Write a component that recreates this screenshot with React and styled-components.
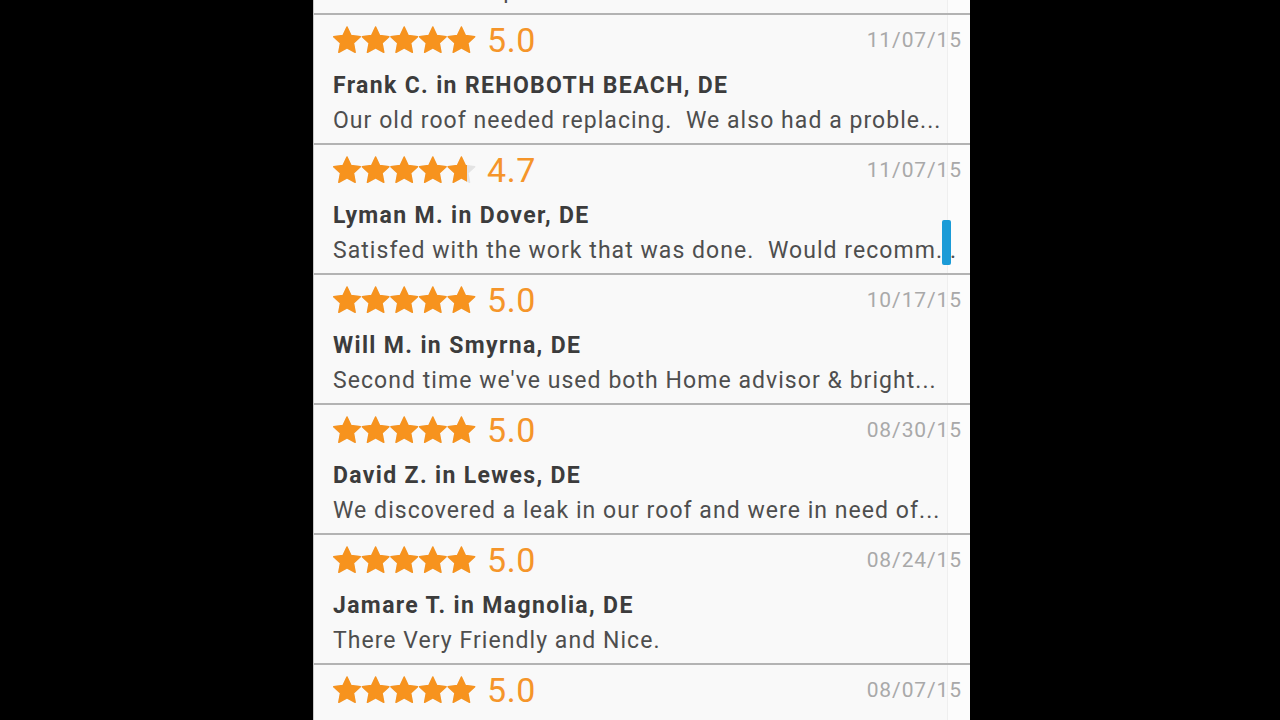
import { useId } from "react"
import styled, { createGlobalStyle } from "styled-components"

const reviews = [
    { rating: 5.0, date: "11/07/15", name: "Frank C. in REHOBOTH BEACH, DE", text: "Our old roof needed replacing.  We also had a proble..." },
    { rating: 4.7, date: "11/07/15", name: "Lyman M. in Dover, DE", text: "Satisfed with the work that was done.  Would recomm...", cursor: true },
    { rating: 5.0, date: "10/17/15", name: "Will M. in Smyrna, DE", text: "Second time we've used both Home advisor & bright..." },
    { rating: 5.0, date: "08/30/15", name: "David Z. in Lewes, DE", text: "We discovered a leak in our roof and were in need of..." },
    { rating: 5.0, date: "08/24/15", name: "Jamare T. in Magnolia, DE", text: "There Very Friendly and Nice." },
    { rating: 5.0, date: "08/07/15", name: "", text: "" },
]

const STAR = "14,1 18,9.5 27.3,10.7 20.5,17.1 22.2,26.3 14,21.8 5.8,26.3 7.5,17.1 0.7,10.7 10,9.5"
const STEP = 28.6

function Stars({ rating }){
    const id = useId().replace(/:/g, "")
    const full = Math.floor(rating)
    const fillWidth = full * STEP + (rating - full) * 28
    const stars = [0, 1, 2, 3, 4].map(i => (
        <polygon key={i} points={STAR} transform={`translate(${i * STEP} 0)`} strokeLinejoin="round" strokeWidth="1.4" />
    ))
    return(
        <svg width="143" height="28" viewBox="0 0 143 28">
            <defs>
                <clipPath id={id}><rect x="0" y="0" width={fillWidth} height="28" /></clipPath>
            </defs>
            <g fill="#e3e3e3" stroke="#e3e3e3">{stars}</g>
            <g fill="#f7931e" stroke="#f7931e" clipPath={`url(#${id})`}>{stars}</g>
        </svg>
    )
}

export default function App(){
    return(
        <Page>
            <GlobalStyle />
            <Panel>
                <PartialRow>
                    <Body>Done on time & professional.</Body>
                </PartialRow>
                {reviews.map((r, i) => (
                    <Row key={i}>
                        <Header>
                            <Stars rating={r.rating} />
                            <Score>{r.rating.toFixed(1)}</Score>
                            <Date>{r.date}</Date>
                        </Header>
                        <Name>{r.name}</Name>
                        <Body>{r.text}</Body>
                        {r.cursor && <Cursor />}
                    </Row>
                ))}
            </Panel>
        </Page>
    )
}

const GlobalStyle = createGlobalStyle`
    *{ box-sizing: border-box; }
    body{
        margin: 0;
        background: #000000;
        font-family: Roboto, "Noto Sans", sans-serif;
    }
`
const Page = styled.div`
    width: 1280px;
    height: 720px;
    padding-left: 313px;
    background: #000000;
    overflow: hidden;
`
const Panel = styled.div`
    width: 657px;
    height: 720px;
    overflow: hidden;
    border-left: 1px solid #c9c9c9;
    background: linear-gradient(to right, #f9f9f9 633px, #efefef 633px, #efefef 634px, #fcfcfc 634px);
`
const PartialRow = styled.div`
    height: 15px;
    display: flex;
    flex-direction: column;
    justify-content: flex-end;
    overflow: hidden;
    padding: 0 9px 4px 12px;
    border-bottom: 2px solid #b3b3b3;
`
const Row = styled.section`
    position: relative;
    height: 130px;
    padding: 10px 8px 4px 19px;
    border-bottom: 2px solid #b3b3b3;
`
const Header = styled.div`
    display: flex;
    align-items: center;
    height: 30px;
    margin-bottom: 14px;
`
const Score = styled.span`
    margin-left: 11px;
    font-size: 34px;
    line-height: 30px;
    letter-spacing: 0.6px;
    color: #f5952a;
`
const Date = styled.span`
    margin-left: auto;
    font-size: 21px;
    line-height: 30px;
    letter-spacing: 0.9px;
    color: #a9a9a9;
`
const Name = styled.h2`
    margin: 0;
    font-size: 23px;
    line-height: 34px;
    font-weight: 700;
    letter-spacing: 1.35px;
    color: #3c3c3c;
    white-space: nowrap;
`
const Body = styled.p`
    flex-shrink: 0;
    margin: 0;
    font-size: 23px;
    line-height: 36px;
    letter-spacing: 1.05px;
    color: #4e4e4e;
    white-space: pre;
    overflow: hidden;
`
const Cursor = styled.div`
    position: absolute;
    top: 75px;
    right: 19px;
    width: 9px;
    height: 45px;
    border-radius: 2px;
    background: #1b9bd7;
`
